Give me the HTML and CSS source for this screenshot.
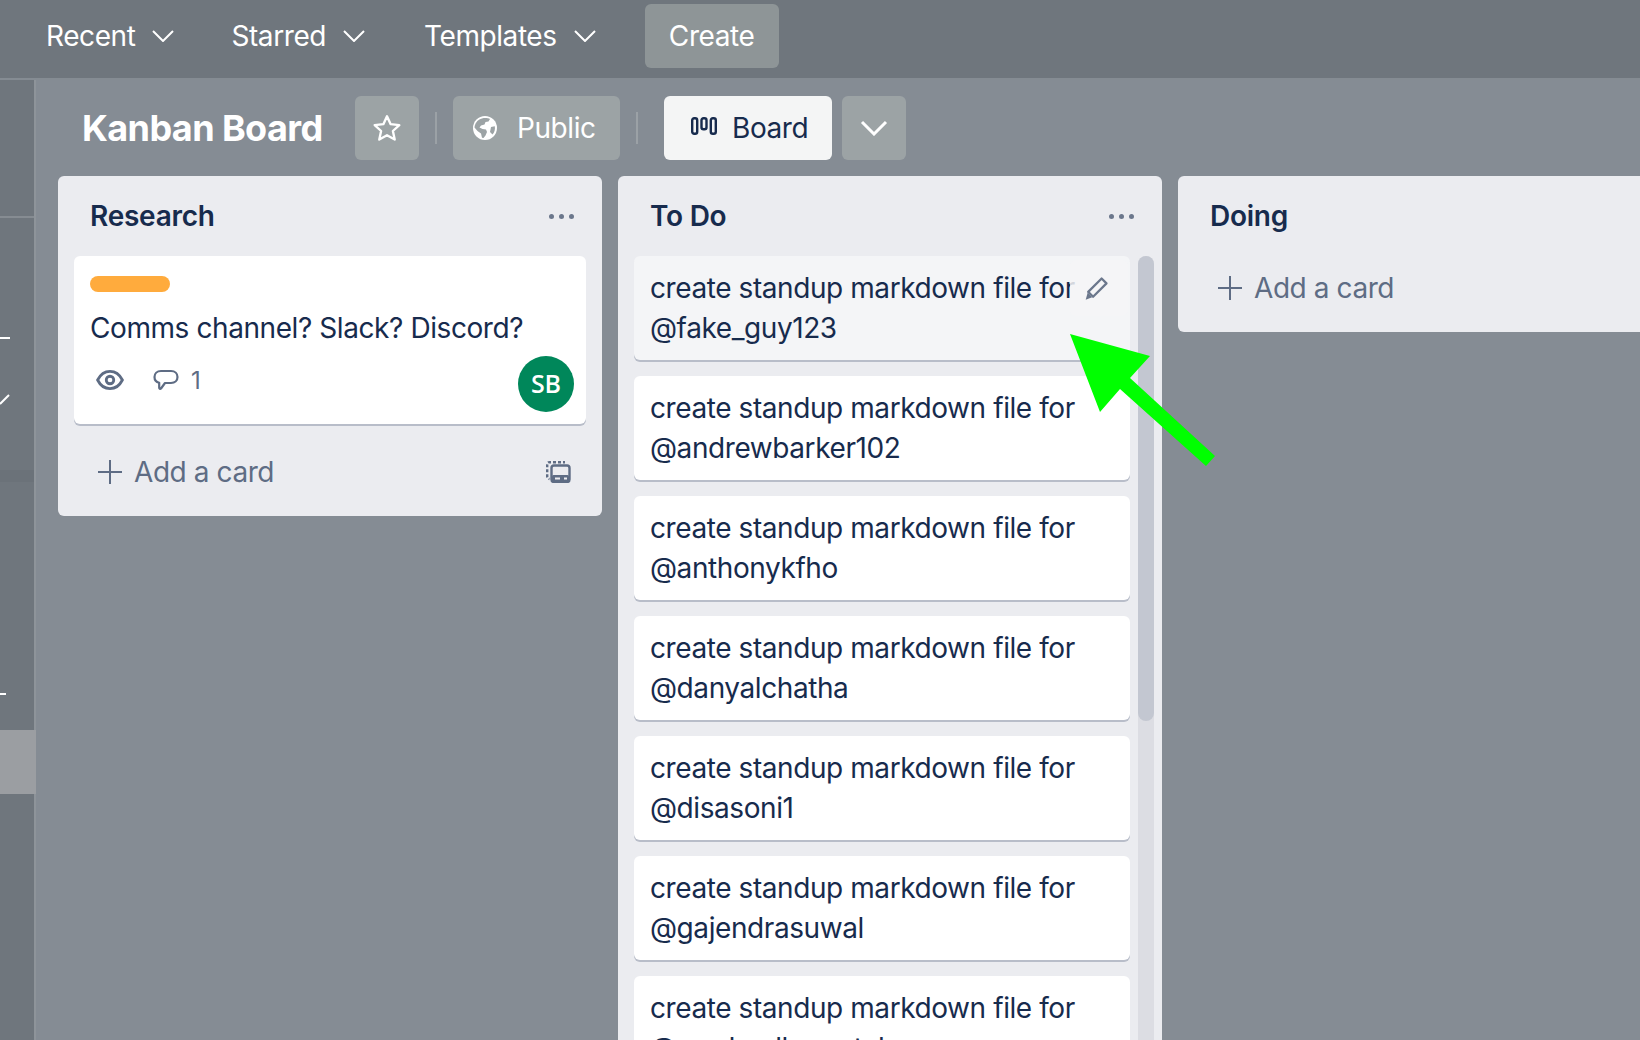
FILE: index.html
```html
<!DOCTYPE html>
<html lang="en">
<head>
<meta charset="utf-8">
<title>Kanban Board</title>
<link rel="stylesheet" href="styles.css">
</head>
<body>
<nav class="topnav">
  <a class="navitem">Recent<svg class="navchev" viewBox="0 0 22 12"><path d="M1 1l10 10L21 1"/></svg></a>
  <a class="navitem">Starred<svg class="navchev" viewBox="0 0 22 12"><path d="M1 1l10 10L21 1"/></svg></a>
  <a class="navitem">Templates<svg class="navchev" viewBox="0 0 22 12"><path d="M1 1l10 10L21 1"/></svg></a>
  <a class="createbtn">Create</a>
</nav>
<div class="main">
  <aside class="sidebar">
    <div class="side-top"></div>
    <div class="side-mid">
      <span class="tick tick-a"></span>
      <svg class="side-check" viewBox="0 0 10 12"><path d="M0 11L9 2"/></svg>
    </div>
    <div class="side-band"></div>
    <div class="side-low"><span class="tick tick-b"></span></div>
    <div class="side-sel"></div>
  </aside>
  <div class="board">
    <header class="boardbar">
      <h1 class="boardtitle">Kanban Board</h1>
      <button class="bbtn bbtn-star" aria-label="Star">
        <svg class="ic-star" viewBox="0 0 28 26"><path d="M14 2l3.4 7.4 8.1.9-6 5.5 1.7 8L14 19.700l-7.200 4.100 1.700-8-6-5.500 8.100-.9z"/></svg>
      </button>
      <span class="vsep"></span>
      <button class="bbtn bbtn-public">
        <svg class="ic-globe" viewBox="0 0 24 24"><circle cx="12" cy="12" r="12" fill="#fff"/><path fill="#9ca3a5" d="M9 2.500c2.500-.7 6-.6 8 .5l-1.500 2.500-3 .5-1 2.500-3.500 1-1.500 2 3 1.500 3.500.5 1 2.500-1.500 3.500-2 2.500-1.500-.3-1-4.200-3.500-2.500-3-3.500c.3-4 3-7.500 6-8.500zM18 11l3.800-.8c.5 3-.2 6-2.300 8.300L17 16z"/></svg>
        <span>Public</span>
      </button>
      <span class="vsep"></span>
      <button class="bbtn bbtn-board">
        <svg class="ic-board" viewBox="0 0 26 18"><rect x="1.200" y="1.200" width="5" height="15.600" rx="2"/><rect x="10.500" y="1.200" width="5" height="11" rx="2"/><rect x="19.800" y="1.200" width="5" height="15.600" rx="2"/></svg>
        <span>Board</span>
      </button>
      <button class="bbtn bbtn-more" aria-label="More">
        <svg class="ic-chev" viewBox="0 0 28 16"><path d="M2 2l12 12L26 2"/></svg>
      </button>
    </header>
    <div class="lists">
      <section class="list list-research">
        <div class="listhead"><h2>Research</h2>
          <span class="dots"><i></i><i></i><i></i></span></div>
        <article class="card card-rich">
          <div class="label"></div>
          <p class="cardtext">Comms channel? Slack? Discord?</p>
          <div class="cardfoot">
            <div class="badges">
              <svg class="ic-eye" viewBox="0 0 26 20"><path d="M1.500 10C4 5 8 2 13 2s9 3 11.500 8C22 15 18 18 13 18S4 15 1.500 10z"/><circle cx="13" cy="10" r="3.500"/></svg>
              <svg class="ic-comment" viewBox="0 0 26 22"><path d="M8 2h10c4 0 6.500 2.500 6.500 6s-2.500 6-6.500 6h-6l-4 5.500c-.8.800-1.800.3-1.800-.7v-5.100C3 13 1.500 11 1.500 8 1.500 4.500 4 2 8 2z"/></svg>
              <span class="count">1</span>
            </div>
            <div class="avatar">SB</div>
          </div>
        </article>
        <div class="addrow addrow-research">
          <svg class="ic-plus" viewBox="0 0 24 24"><path d="M12 0v24M0 12h24"/></svg>
          <span class="addtext">Add a card</span>
          <svg class="ic-template" viewBox="0 0 25 22"><path class="tpl-dash" d="M5 1.200H3.500Q1.200 1.200 1.200 3.500v12Q1.200 17.500 3.500 18" /><path class="tpl-dash" d="M7 1.200h12"/><rect x="5.500" y="4.500" width="18" height="16.500" rx="2.500"/><rect class="tpl-fill" x="6" y="14" width="17" height="7" rx="1.500"/><rect class="tpl-hole" x="9" y="16.500" width="5" height="2"/><rect class="tpl-hole" x="18" y="16.500" width="3" height="2"/></svg>
        </div>
      </section>

      <section class="list list-todo">
        <div class="listhead"><h2>To Do</h2>
          <span class="dots"><i></i><i></i><i></i></span></div>
        <div class="todo-body">
          <div class="cards">
            <article class="card card-hover">
              <p class="cardtext">create standup markdown file for<br>@fake_guy123</p>
              <span class="editbtn">
                <svg class="ic-pencil" viewBox="0 0 22 22"><path d="M15.500 2.200l4.300 4.300L8 18.300l-4.300-4.300z"/><path class="pen-tip" d="M3.200 14.800l4 4-5.700 2.200z"/></svg>
              </span>
            </article>
            <article class="card"><p class="cardtext">create standup markdown file for<br>@andrewbarker102</p></article>
            <article class="card"><p class="cardtext">create standup markdown file for<br>@anthonykfho</p></article>
            <article class="card"><p class="cardtext">create standup markdown file for<br>@danyalchatha</p></article>
            <article class="card"><p class="cardtext">create standup markdown file for<br>@disasoni1</p></article>
            <article class="card"><p class="cardtext">create standup markdown file for<br>@gajendrasuwal</p></article>
            <article class="card"><p class="cardtext">create standup markdown file for<br>@randmullermatah</p></article>
          </div>
          <div class="scrolltrack"><div class="scrollthumb"></div></div>
        </div>
      </section>

      <section class="list list-doing">
        <div class="listhead"><h2>Doing</h2></div>
        <div class="addrow addrow-doing">
          <svg class="ic-plus" viewBox="0 0 24 24"><path d="M12 0v24M0 12h24"/></svg>
          <span class="addtext">Add a card</span>
        </div>
      </section>
    </div>
  </div>
</div>
<svg class="arrow" viewBox="0 0 160 140"><polygon points="0,0 80,22 60,44 145,122 136,132 50,55 30,78"/></svg>
</body>
</html>
```
FILE: styles.css
```css
* { box-sizing: border-box; }
html, body { margin: 0; height: 1040px; overflow: hidden; }
body {
  position: relative;
  width: 1640px;
  font-family: "Inter", "Liberation Sans", sans-serif;
  font-size: 28px;
  line-height: 40px;
  letter-spacing: -0.42px;
  color: #172b4d;
  background: #858c94;
}
h1, h2, p { margin: 0; }
button { font: inherit; letter-spacing: inherit; border: 0; padding: 0; }

/* top navigation */
.topnav {
  height: 80px;
  display: flex;
  align-items: flex-start;
  padding: 4px 0 0 46px;
  background: #6f767d;
  border-bottom: 2px solid #858c93;
  color: #fff;
}
.navitem {
  display: flex;
  align-items: center;
  height: 64px;
  margin-right: 57px;
  gap: 17px;
}
.navitem:nth-child(2) { margin-right: 59px; }
.navitem:nth-child(3) { margin-right: 49px; }
.navchev { width: 22px; height: 12px; fill: none; stroke: #fff; stroke-width: 2; }
.createbtn {
  width: 134px;
  height: 64px;
  display: flex;
  align-items: center;
  justify-content: center;
  background: #8e9597;
  border-radius: 6px;
}

.main { display: flex; height: 960px; }

/* left rail, mostly cropped */
.sidebar {
  width: 36px;
  flex: none;
  display: flex;
  flex-direction: column;
  background: #6f767d;
  border-right: 2px solid #8e949a;
}
.side-top { height: 138px; border-bottom: 2px solid #868c92; }
.side-mid { height: 252px; padding-top: 119px; }
.tick { display: block; height: 2px; background: #fff; }
.tick-a { width: 10px; }
.side-check { display: block; width: 10px; height: 12px; margin-top: 54px; fill: none; stroke: #fff; stroke-width: 2; }
.side-band { height: 12px; background: #6b7279; }
.side-low { height: 248px; padding-top: 211px; }
.tick-b { width: 6px; }
.side-sel { height: 64px; background: #9b9ea2; margin-right: -2px; }

/* board */
.board { flex: 1; min-width: 0; }
.boardbar {
  height: 96px;
  display: flex;
  align-items: flex-start;
  padding: 16px 0 0 46px;
}
.boardtitle {
  width: 273px;
  height: 64px;
  font-size: 36px;
  line-height: 64px;
  font-weight: 700;
  letter-spacing: -0.6px;
  color: #fff;
  white-space: nowrap;
}
.bbtn {
  height: 64px;
  display: flex;
  align-items: center;
  background: #9ca3a5;
  border-radius: 6px;
  color: #fff;
}
.bbtn-star { width: 64px; justify-content: center; }
.bbtn-public { width: 167px; padding-left: 20px; gap: 20px; }
.bbtn-board { width: 168px; padding-left: 27px; gap: 15px; background: #f4f5f5; color: #172b4d; margin-left: 10px; }
.bbtn-more { width: 64px; margin-left: 10px; justify-content: center; }
.vsep { width: 2px; height: 32px; margin: 16px 16px 0; background: #9ba1a6; }
.ic-star { width: 30px; height: 28px; fill: none; stroke: #fff; stroke-width: 2.200; stroke-linejoin: round; }
.ic-globe { width: 24px; height: 24px; }
.ic-board { width: 26px; height: 18px; margin-top: -4px; fill: none; stroke: #172b4d; stroke-width: 2.400; }
.ic-chev { width: 28px; height: 16px; fill: none; stroke: #fff; stroke-width: 3; }

.lists {
  display: flex;
  align-items: flex-start;
  gap: 16px;
  padding-left: 22px;
  width: 1800px;
}
.list {
  width: 544px;
  flex: none;
  background: #ebecf0;
  border-radius: 6px;
}
.listhead {
  height: 80px;
  display: flex;
  align-items: center;
  justify-content: space-between;
  padding: 0 28px 0 32px;
}
.listhead h2 { font-size: 28px; line-height: 40px; font-weight: 600; letter-spacing: -0.25px; }
.dots { display: flex; gap: 5px; }
.dots i { width: 5px; height: 5px; border-radius: 50%; background: #6b778c; }

.card {
  position: relative;
  background: #fff;
  border-radius: 6px;
  padding: 12px 16px;
  box-shadow: 0 2px 0 #b8bdc9;
}
.card-rich { margin: 0 16px; padding: 20px 12px 12px 16px; }
.card-hover { background: #f4f5f7; }
.cardtext { white-space: nowrap; }
.label { width: 80px; height: 16px; border-radius: 8px; background: #ffab3d; margin-bottom: 16px; }
.cardfoot { display: flex; justify-content: space-between; align-items: flex-start; margin-top: 8px; }
.badges { display: flex; align-items: center; height: 48px; color: #5e6c84; }
.ic-eye { width: 28px; height: 22px; margin-left: 6px; fill: none; stroke: #5e6c84; stroke-width: 2.600; }
.ic-comment { width: 26px; height: 22px; margin-left: 29px; fill: none; stroke: #5e6c84; stroke-width: 2.200; stroke-linejoin: round; }
.count { font-size: 24px; margin-left: 12px; padding-top: 2px; }
.avatar {
  width: 56px;
  height: 56px;
  border-radius: 50%;
  background: #00875a;
  color: #fff;
  font-family: "Open Sans", "Noto Sans", sans-serif;
  font-size: 25px;
  line-height: 54px;
  font-weight: 600;
  letter-spacing: 0;
  text-align: center;
}

.addrow { display: flex; align-items: center; height: 56px; color: #5e6c84; }
.addrow-research { margin: 20px 0 16px; padding: 0 31px 0 40px; }
.addrow-doing { margin: 4px 0 16px; padding-left: 40px; }
.ic-plus { width: 24px; height: 24px; fill: none; stroke: #5e6c84; stroke-width: 2; }
.addtext { margin-left: 12px; flex: 1; }
.ic-template { width: 25px; height: 22px; fill: none; stroke: #5e6c84; stroke-width: 2.400; }
.tpl-dash { stroke-dasharray: 3 2; }
.tpl-fill { fill: #5e6c84; stroke: none; }
.tpl-hole { fill: #ebecf0; stroke: none; }

.todo-body { display: flex; gap: 8px; padding: 0 8px 0 16px; height: 880px; overflow: hidden; }
.cards { width: 496px; flex: none; display: flex; flex-direction: column; gap: 16px; }
.cards .card { flex: none; height: 104px; }
.scrolltrack { width: 16px; flex: none; background: #dcdde3; border-radius: 8px 8px 0 0; }
.scrollthumb { height: 465px; background: #c3c7d1; border-radius: 8px; }

.editbtn {
  position: absolute;
  top: 4px;
  right: 2px;
  width: 58px;
  height: 56px;
  display: flex;
  align-items: center;
  justify-content: center;
  background: rgba(244, 245, 247, 0.85);
  border-radius: 6px;
}
.ic-pencil { width: 25px; height: 25px; margin-right: 6px; fill: none; stroke: #6b778c; stroke-width: 2; stroke-linejoin: round; }
.pen-tip { fill: #6b778c; stroke: none; }

/* green annotation arrow sits on top of the board */
.arrow {
  position: absolute;
  left: 1070px;
  top: 334px;
  width: 160px;
  height: 140px;
  fill: #00ff00;
}
```
